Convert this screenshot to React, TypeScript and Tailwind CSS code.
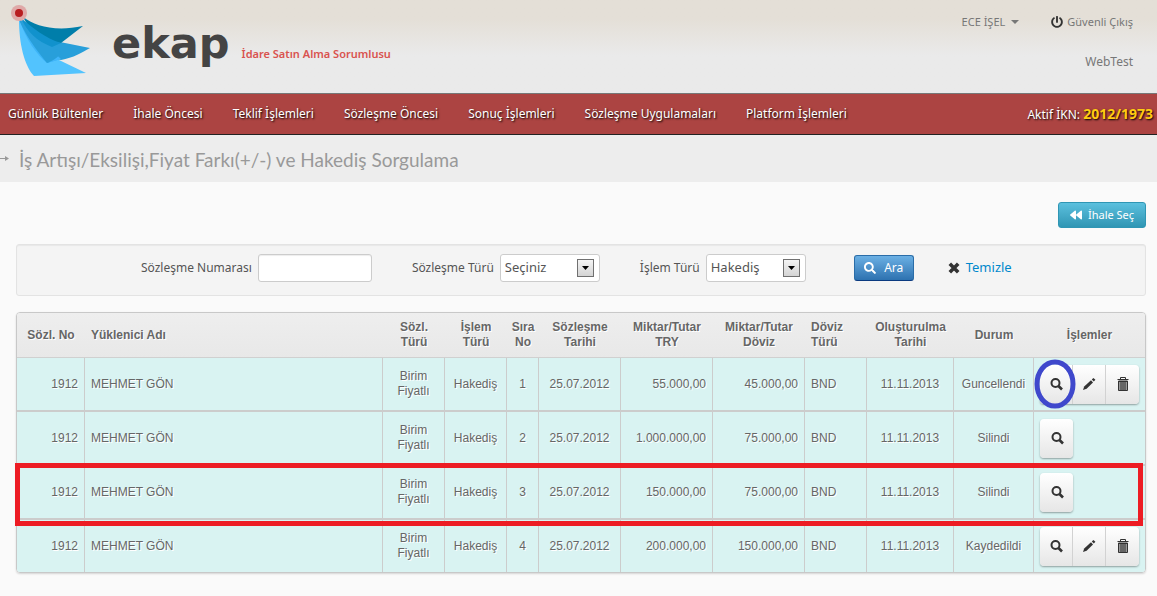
// React
import React from "react";
// React

// Icons
import { FaBackward, FaPowerOff, FaSearch } from "react-icons/fa";
// Icons

type T_Row = {
  order: number;
  amountTry: string;
  amountForeign: string;
  status: string;
  editable: boolean;
  circled?: boolean;
};

const menuItems = [
  "Günlük Bültenler",
  "İhale Öncesi",
  "Teklif İşlemleri",
  "Sözleşme Öncesi",
  "Sonuç İşlemleri",
  "Sözleşme Uygulamaları",
  "Platform İşlemleri",
];

const rows: T_Row[] = [
  { order: 1, amountTry: "55.000,00", amountForeign: "45.000,00", status: "Guncellendi", editable: true, circled: true },
  { order: 2, amountTry: "1.000.000,00", amountForeign: "75.000,00", status: "Silindi", editable: false },
  { order: 3, amountTry: "150.000,00", amountForeign: "75.000,00", status: "Silindi", editable: false },
  { order: 4, amountTry: "200.000,00", amountForeign: "150.000,00", status: "Kaydedildi", editable: true },
];

const Logo: React.FunctionComponent = () => (
  <svg width="84" height="74" viewBox="0 0 84 74" aria-hidden="true">
    <path d="M11 15 C11 39 16 61 26 72 L78 69 L51 56 Z" fill="#52c3fe" />
    <path d="M11 15 C18 36 29 51 39 59 L53 55 L63 47 Z" fill="#3db4f8" />
    <path d="M11 15 C21 38 37 53 53 56 C65 54 75 48 82 44 L52 38 Z" fill="#289fda" />
    <path d="M11 15 C19 29 32 46 39 59 L53 55 Z" fill="#40b5f9" />
    <path d="M11 15 C19 36 34 52 39 59 C43 58 50 53 54 49 L40 40 Z" fill="#289fda" />
    <path d="M15 13 C27 22 47 28 75 22 L53 39 C34 36 22 27 15 13 Z" fill="#007eaa" />
    <path d="M13 14 C25 24 37 34 53 39 L44 43 C29 37 19 28 13 14 Z" fill="#1192cd" />
    <circle cx="11" cy="9" r="8" fill="#dfa9a8" />
    <circle cx="11" cy="9" r="4" fill="#b81d20" />
  </svg>
);

const SearchGlyph: React.FunctionComponent = () => (
  <svg width="14" height="14" viewBox="0 0 14 14" fill="none" stroke="#333" aria-hidden="true">
    <circle cx="6.5" cy="6" r="4" strokeWidth="2" />
    <path d="M9.5 9 L13 12.5" strokeWidth="2.6" />
  </svg>
);

const PencilGlyph: React.FunctionComponent = () => (
  <svg width="14" height="14" viewBox="0 0 14 14" fill="#333" aria-hidden="true">
    <path d="M1 13 L2.2 9.4 L9 3.2 L11 5.4 L4.6 11.8 Z" />
    <path d="M9.8 2.5 L11.4 1 L13.4 2.8 L11.8 4.6 Z" />
  </svg>
);

const TrashGlyph: React.FunctionComponent = () => (
  <svg width="12" height="14" viewBox="0 0 12 14" fill="none" stroke="#333" aria-hidden="true">
    <path d="M1.5 4 H10.5 V13.5 H1.5 Z" fill="#999" />
    <path d="M0.5 2.5 H11.5 M3.5 2 V0.5 H8.5 V2" />
    <path d="M1 4.5 H11" />
    <path d="M4 4 V13 M6 4 V13 M8 4 V13" />
  </svg>
);

const CrossGlyph: React.FunctionComponent = () => (
  <svg width="12" height="12" viewBox="0 0 12 12" stroke="#333" strokeWidth="3.6" aria-hidden="true">
    <path d="M1.8 1.8 L10.2 10.2 M10.2 1.8 L1.8 10.2" />
  </svg>
);

type T_SelectProps = {
  id: string;
  label: string;
  options: string[];
};

const SelectField: React.FunctionComponent<T_SelectProps> = ({ id, label, options }) => (
  <div className="flex items-center gap-1.5">
    <label htmlFor={id} className="text-xs">
      {label}
    </label>
    <div className="relative">
      <select
        id={id}
        className="h-7 w-[100px] appearance-none rounded-[3px] border border-[#ccc] bg-white pl-1 text-[13px] text-[#555]"
      >
        {options.map((item) => (
          <option key={item}>{item}</option>
        ))}
      </select>
      <span className="pointer-events-none absolute top-[5px] right-1.5 flex h-[18px] w-[17px] items-center justify-center border border-[#707070] bg-linear-to-b from-[#f4f4f4] to-[#d4d4d4]">
        <svg width="7" height="4" viewBox="0 0 7 4" aria-hidden="true">
          <path d="M0 0 H7 L3.5 4 Z" fill="#000" />
        </svg>
      </span>
    </div>
  </div>
);

const actionClass =
  "flex h-[39px] w-[33px] items-center justify-center border-r border-[#d2d2d2] bg-linear-to-b from-white to-[#e6e6e6] first:rounded-l last:rounded-r last:border-r-0";

const Actions: React.FunctionComponent<{ row: T_Row }> = ({ row }) => (
  <div className="relative inline-flex align-middle">
    <div className="flex rounded shadow-[0_1px_2px_rgba(0,0,0,0.35)]">
      <button type="button" aria-label="Görüntüle" className={actionClass}>
        <SearchGlyph />
      </button>
      {row.editable && (
        <>
          <button type="button" aria-label="Düzenle" className={actionClass}>
            <PencilGlyph />
          </button>
          <button type="button" aria-label="Sil" className={actionClass}>
            <TrashGlyph />
          </button>
        </>
      )}
    </div>
    {row.circled && (
      <svg
        className="pointer-events-none absolute -top-1.5 -left-1.5"
        width="42"
        height="50"
        viewBox="0 0 42 50"
        aria-hidden="true"
      >
        <ellipse cx="21" cy="25" rx="18" ry="22" fill="none" stroke="#3f48cc" strokeWidth="5" />
      </svg>
    )}
  </div>
);

const App: React.FunctionComponent = () => {
  return (
    <div className="min-h-screen bg-[#fafafa] font-['Noto_Sans',sans-serif] text-[13px] text-[#555]">
      <header className="flex h-[94px] items-start justify-between border-b border-[#777] bg-linear-to-b from-[#e4dfd7] from-20% to-[#eaeaea] to-60%">
        <div className="flex pt-1 pl-2">
          <Logo />
          <span className="pt-3 pl-5 font-['DejaVu_Sans',sans-serif] text-[43px] leading-[54px] font-bold text-[#444]">
            ekap
          </span>
          <span className="pt-10 pl-3 text-[11px] leading-5 font-semibold text-[#d9534f]">
            İdare Satın Alma Sorumlusu
          </span>
        </div>
        <div className="flex flex-col items-end gap-5 pt-3 pr-6 text-[11px] leading-5 text-[#777]">
          <div className="flex gap-8">
            <button type="button" className="flex items-center gap-1.5">
              ECE İŞEL
              <svg width="8" height="4" viewBox="0 0 8 4" aria-hidden="true">
                <path d="M0 0 H8 L4 4 Z" fill="#777" />
              </svg>
            </button>
            <a href="#" className="flex items-center gap-1">
              <FaPowerOff className="size-3 text-[#333]" />
              Güvenli Çıkış
            </a>
          </div>
          <span className="text-xs leading-5">WebTest</span>
        </div>
      </header>

      <nav className="flex h-[41px] items-center justify-between border-b border-[#222] bg-[#ac4442] pr-1 pl-2 text-xs text-white [text-shadow:1px_1px_2px_#000]">
        <div className="flex gap-[30px]">
          {menuItems.map((item) => (
            <a key={item} href="#">
              {item}
            </a>
          ))}
        </div>
        <p>
          Aktif İKN: <b className="text-sm text-[#fc1]">2012/1973</b>
        </p>
      </nav>

      <div className="flex h-[47px] items-center gap-2.5 bg-[#ededed] text-[#999]">
        <svg width="9" height="7" viewBox="0 0 9 7" aria-hidden="true">
          <path d="M0 3.5 H8" stroke="#999" />
          <path d="M5 1 L9 3.5 L5 6 Z" fill="#999" />
        </svg>
        <h1 className="pt-1 font-['Lato','Noto_Sans',sans-serif] text-[19px]">
          İş Artışı/Eksilişi,Fiyat Farkı(+/-) ve Hakediş Sorgulama
        </h1>
      </div>

      <main className="pt-5 pr-[11px] pl-4">
        <div className="flex justify-end">
          <button
            type="button"
            className="flex h-[26px] w-[88px] items-center justify-center gap-1.5 rounded-[3px] border border-[#2f96b4] bg-linear-to-b from-[#5bc0de] to-[#2f96b4] text-[11px] text-white"
          >
            <FaBackward className="size-3" />
            İhale Seç
          </button>
        </div>

        <form className="mt-4 flex h-[52px] items-center rounded-[3px] border border-[#e3e3e3] bg-[#f4f4f4] pb-1 pl-[124px] shadow-[inset_0_1px_1px_rgba(0,0,0,0.05)]">
          <div className="flex items-center gap-1.5">
            <label htmlFor="contractNo" className="text-xs">
              Sözleşme Numarası
            </label>
            <input
              id="contractNo"
              type="text"
              className="h-7 w-[114px] rounded-[3px] border border-[#ccc] bg-white px-1 shadow-[inset_0_1px_1px_rgba(0,0,0,0.075)]"
            />
          </div>
          <div className="ml-10">
            <SelectField id="contractType" label="Sözleşme Türü" options={["Seçiniz"]} />
          </div>
          <div className="ml-10">
            <SelectField id="operationType" label="İşlem Türü" options={["Hakediş"]} />
          </div>
          <button
            type="button"
            className="ml-12 flex h-[26px] w-[60px] items-center justify-center gap-2 rounded-[3px] border border-[#2a6da8] border-b-[#0a3a80] bg-linear-to-b from-[#6bb0e4] to-[#2d72b0] text-xs text-white"
          >
            <FaSearch />
            Ara
          </button>
          <a href="#" className="ml-[34px] flex items-center gap-1.5 text-[#08c]">
            <CrossGlyph />
            Temizle
          </a>
        </form>

        <div className="relative mt-4">
          <div className="overflow-hidden rounded-[4px] border border-[#c8c8c8] shadow-[0_1px_2px_rgba(0,0,0,0.15)]">
            <table className="w-full table-fixed border-separate border-spacing-0 font-['Liberation_Sans',sans-serif] text-xs leading-[15px] text-[#666] [text-shadow:1px_1px_0_#fff]">
              <colgroup>
                <col className="w-[68px]" />
                <col />
                <col className="w-[62px]" />
                <col className="w-[62px]" />
                <col className="w-8" />
                <col className="w-[82px]" />
                <col className="w-[92px]" />
                <col className="w-[92px]" />
                <col className="w-[62px]" />
                <col className="w-[87px]" />
                <col className="w-20" />
                <col className="w-[111px]" />
              </colgroup>
              <thead>
                <tr className="h-[45px] bg-linear-to-b from-[#eee] to-[#e8e8e8] [&>th]:border-b [&>th]:border-[#d0d0d0]">
                  <th>Sözl. No</th>
                  <th className="pl-1.5 text-left">Yüklenici Adı</th>
                  <th>Sözl.<br />Türü</th>
                  <th>İşlem<br />Türü</th>
                  <th>Sıra<br />No</th>
                  <th>Sözleşme<br />Tarihi</th>
                  <th>Miktar/Tutar<br />TRY</th>
                  <th>Miktar/Tutar<br />Döviz</th>
                  <th className="pl-1.5 text-left">Döviz<br />Türü</th>
                  <th>Oluşturulma<br />Tarihi</th>
                  <th>Durum</th>
                  <th>İşlemler</th>
                </tr>
              </thead>
              <tbody>
                {rows.map((row) => (
                  <tr
                    key={row.order}
                    className="h-[54px] bg-[#d9f3f2] text-center last:h-[52px] [&>td]:border-r [&>td]:border-b-2 [&>td]:border-[#ccc] [&>td:last-child]:border-r-0 last:[&>td]:border-b-0"
                  >
                    <td className="pr-1.5 text-right">1912</td>
                    <td className="pl-1.5 text-left">MEHMET GÖN</td>
                    <td>Birim<br />Fiyatlı</td>
                    <td>Hakediş</td>
                    <td>{row.order}</td>
                    <td>25.07.2012</td>
                    <td className="pr-1.5 text-right">{row.amountTry}</td>
                    <td className="pr-1.5 text-right">{row.amountForeign}</td>
                    <td className="pl-1.5 text-left">BND</td>
                    <td>11.11.2013</td>
                    <td>{row.status}</td>
                    <td className="pl-1.5 text-left">
                      <Actions row={row} />
                    </td>
                  </tr>
                ))}
              </tbody>
            </table>
          </div>
          {/* frame around the third record */}
          <div className="pointer-events-none absolute top-[151px] right-[3px] -left-px h-[63px] border-5 border-[#ed1c24]" />
        </div>
      </main>
    </div>
  );
};

export default App;
